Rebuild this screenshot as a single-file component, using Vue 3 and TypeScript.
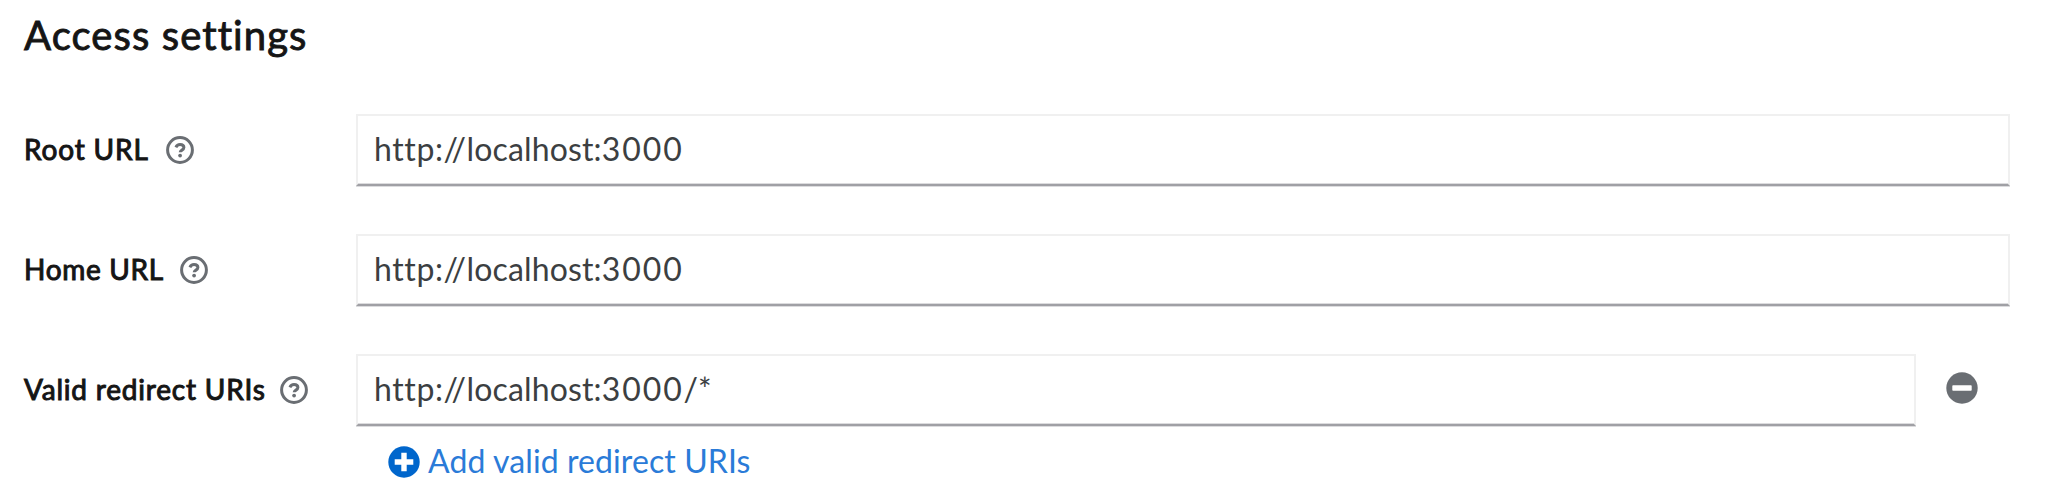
<script setup lang="ts">
interface Segment {
  text: string
  kind: 'scheme' | 'host' | 'port' | 'path'
}

interface Field {
  key: string
  label: string
  value: Segment[]
  removable: boolean
}

const base: Segment[] = [
  { text: 'http://', kind: 'scheme' },
  { text: 'localhost:', kind: 'host' },
  { text: '3000', kind: 'port' },
]

const fields: Field[] = [
  { key: 'root', label: 'Root URL', value: base, removable: false },
  { key: 'home', label: 'Home URL', value: base, removable: false },
  { key: 'redirect', label: 'Valid redirect URIs', value: [...base, { text: '/*', kind: 'path' }], removable: true },
]
</script>

<template>
  <section class="settings">
    <h1 class="title">Access settings</h1>
    <div v-for="field in fields" :key="field.key" class="row">
      <div class="label">
        <span class="label-text" :class="field.key">{{ field.label }}</span>
        <svg class="help" viewBox="0 0 28 28" aria-hidden="true">
          <circle cx="14" cy="14" r="12.4" />
          <path d="M9.9 11.3C10.7 9.4 12 8.5 14 8.5c2.2 0 3.9 1.2 3.9 3.1 0 2.5-3.7 2.5-3.7 4.7" />
          <circle class="dot" cx="14.1" cy="19.6" r="1.9" />
        </svg>
      </div>
      <div class="input"><span v-for="part in field.value" :key="part.kind" :class="part.kind">{{ part.text }}</span></div>
      <button v-if="field.removable" class="remove" type="button" aria-label="Remove">
        <svg viewBox="0 0 32 32">
          <circle cx="16" cy="16" r="15.7" />
          <rect x="6.3" y="13.2" width="19.4" height="5.5" rx=".8" />
        </svg>
      </button>
    </div>
    <button class="add" type="button">
      <svg viewBox="0 0 32 32">
        <circle cx="16" cy="16" r="15.7" />
        <path d="M13.3 6.7h5.4v6.6h6.6v5.4h-6.6v6.6h-5.4v-6.6H6.7v-5.4h6.6z" />
      </svg>
      <span class="add-text">Add valid redirect URIs</span>
    </button>
  </section>
</template>

<style>
body {
  background: #fff;
}
</style>

<style scoped>
.settings {
  box-sizing: border-box;
  height: 496px;
  padding: 9px 52px 0 24px;
  font-family: Lato, "Noto Sans", sans-serif;
  font-variant-ligatures: none;
  color: #151515;
}
.title {
  margin: 0 0 57px;
  height: 48px;
  font-size: 40px;
  line-height: 52px;
  font-weight: 400;
  letter-spacing: 1.1px;
  white-space: nowrap;
  -webkit-text-stroke: 0.9px #151515;
}
.row {
  display: flex;
  height: 72px;
  margin-bottom: 48px;
}
.label {
  display: flex;
  align-items: center;
  width: 332px;
  flex: none;
}
.label-text {
  margin-top: -2px;
  font-size: 28px;
  line-height: 36px;
  font-weight: 400;
  letter-spacing: 0.85px;
  white-space: nowrap;
  -webkit-text-stroke: 1px #151515;
}
.label-text.home {
  letter-spacing: 0.7px;
  margin-right: -1px;
}
.label-text.redirect {
  letter-spacing: 0.8px;
  margin-right: -3px;
}
.help {
  width: 28px;
  height: 28px;
  margin-left: 17px;
  fill: none;
  stroke: #6a6e73;
  stroke-width: 3;
}
.help .dot {
  fill: #6a6e73;
  stroke: none;
}
.input {
  box-sizing: border-box;
  flex: 1;
  height: 72px;
  padding: 13px 0 0 16px;
  border: 2px solid #f0f0f0;
  border-bottom: 2px solid #a0a0a5;
  box-shadow: 0 1px 0 #dcdcde, inset 0 -1px 0 #dcdcde;
  font-size: 32px;
  line-height: 40px;
  color: #3c3f42;
  white-space: nowrap;
}
.scheme {
  letter-spacing: 0.6px;
}
.host {
  letter-spacing: 0.15px;
}
.port {
  letter-spacing: 1.9px;
}
.remove {
  width: 94px;
  padding: 0;
  border: 0;
  background: none;
}
.remove svg {
  display: block;
  width: 32px;
  height: 32px;
  margin: -4px 0 0 30px;
  fill: #6a6e73;
}
.remove rect,
.add path {
  fill: #fff;
}
.add {
  display: flex;
  align-items: center;
  height: 40px;
  margin: -32px 0 0 364px;
  padding: 0;
  border: 0;
  background: none;
  font: 400 32px/40px Lato, "Noto Sans", sans-serif;
  letter-spacing: 0.1px;
  color: #2a7bd8;
  white-space: nowrap;
}
.add-text {
  margin-top: -2px;
}
.add svg {
  width: 32px;
  height: 32px;
  margin-right: 8px;
  margin-top: -1px;
  fill: #06c;
}
</style>
